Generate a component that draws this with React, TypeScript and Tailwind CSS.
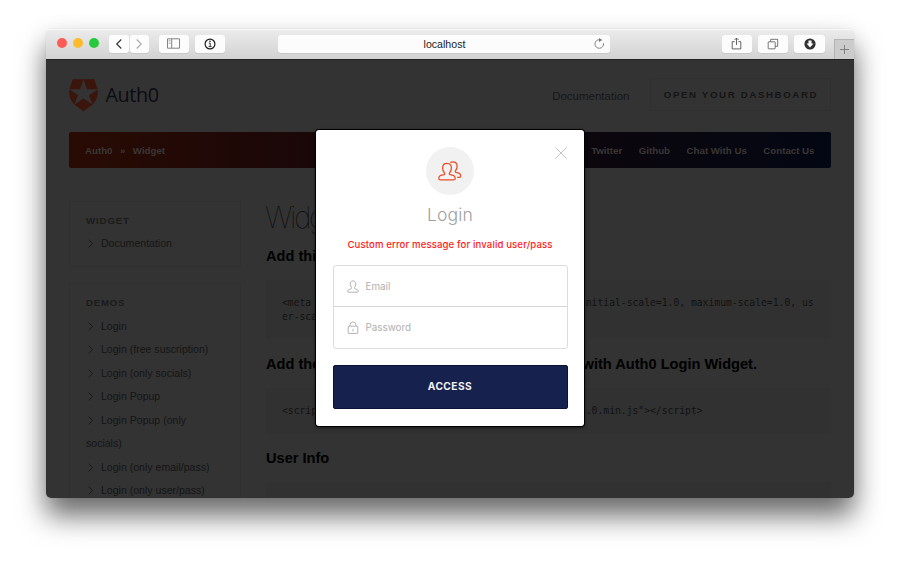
import React from "react";

const demos = [
  "Login",
  "Login (free suscription)",
  "Login (only socials)",
  "Login Popup",
  "Login Popup (only socials)",
  "Login (only email/pass)",
  "Login (only user/pass)",
];

function ToolButton({ className, children }: { className: string; children: React.ReactNode }) {
  return (
    <div className={"flex h-[18px] items-center justify-center rounded-[3px] bg-[#fcfcfc] shadow-[0_1px_0_#c8c8c8] " + className}>
      {children}
    </div>
  );
}

function Toolbar() {
  return (
    <div className="flex h-[30px] items-start rounded-t-[4px] bg-linear-to-b from-[#ececec] to-[#d2d2d2] pt-[5.5px] shadow-[inset_0_1px_0_#f8f8f8]">
      <div className="ml-[10.5px] flex gap-[6.3px] pt-[3.5px]">
        <span className="size-[10px] rounded-full bg-[#fc5b57]" />
        <span className="size-[10px] rounded-full bg-[#fdbc2e]" />
        <span className="size-[10px] rounded-full bg-[#27c93c]" />
      </div>
      <ToolButton className="ml-[9.9px] w-[20px]">
        <svg width="8" height="12" viewBox="0 0 8 12" fill="none" stroke="#333" strokeWidth="1.1"><path d="M6.3 1.5 1.7 6l4.6 4.5" /></svg>
      </ToolButton>
      <ToolButton className="ml-px w-[19px]">
        <svg width="8" height="12" viewBox="0 0 8 12" fill="none" stroke="#aaa" strokeWidth="1.1"><path d="M1.7 1.5 6.3 6l-4.6 4.5" /></svg>
      </ToolButton>
      <ToolButton className="ml-[10px] w-[30px]">
        <svg width="13" height="11" viewBox="0 0 13 11" fill="none" stroke="#777" strokeWidth=".9"><path d="M.5.8h12v9.4H.5zM4.7.8v9.4" /><path d="M1.6 2.5h2M1.6 4h2M1.6 5.5h2" stroke="#999" strokeWidth=".6" /></svg>
      </ToolButton>
      <ToolButton className="ml-[6px] w-[30px]">
        <svg width="12" height="12" viewBox="0 0 12 12" fill="none" stroke="#1c1c1c" strokeWidth="1.2"><circle cx="6" cy="6" r="4.9" /><path d="M4.8 5.1h1.4v3.2M4.6 8.6h3" strokeWidth=".9" /><circle cx="6" cy="3.3" r=".8" fill="#1c1c1c" stroke="none" /></svg>
      </ToolButton>
      <ToolButton className="ml-[53px] w-[332px]">
        <span className="ml-[17px] flex-1 text-center text-[10.6px] leading-[18px] text-[#222]">localhost</span>
        <svg className="mr-[5px]" width="11" height="12" viewBox="0 0 11 12" fill="none" stroke="#777" strokeWidth=".9"><path d="M9.5 5.2a4.3 4.3 0 1 1-3.8-3.5" /><path d="m5 0 3.3 2L5 4z" fill="#777" stroke="none" /></svg>
      </ToolButton>
      <ToolButton className="ml-[112px] w-[30px]">
        <svg width="11" height="13" viewBox="0 0 11 13" fill="none" stroke="#555" strokeWidth=".9"><path d="M3.6 4.7H1.2v7.2h8.6V4.7H7.4M5.5 8V1.2M3.5 3l2-2 2 2" /></svg>
      </ToolButton>
      <ToolButton className="ml-[6.3px] w-[30px]">
        <svg width="12" height="12" viewBox="0 0 12 12" fill="none" stroke="#555" strokeWidth=".8"><rect x="1.2" y="3.8" width="7" height="7" rx=".5" /><path d="M3.7 3.8V1.3h7v7H8.2" /></svg>
      </ToolButton>
      <ToolButton className="ml-[6px] w-[31px]">
        <svg width="12" height="12" viewBox="0 0 12 12"><circle cx="6" cy="6" r="5.6" fill="#303030" /><path d="M4.5 2.5h3v3h2L6 9.4 2.5 5.5h2z" fill="#fff" /></svg>
      </ToolButton>
      <div className="ml-[9px] mt-[4.5px] flex h-[20px] flex-1 items-center justify-center border-l border-t border-[#b4b4b4] bg-[#cbcbcb]">
        <svg width="9" height="9" viewBox="0 0 9 9" stroke="#777" strokeWidth=".9"><path d="M4.5 0v9M0 4.5h9" /></svg>
      </div>
    </div>
  );
}

function SideItem({ label }: { label: string }) {
  return (
    <li>
      <svg className="ml-[2px] mr-[7px] inline-block align-[-1px]" width="6" height="9" viewBox="0 0 6 9" fill="none" stroke="#161616" strokeWidth=".9"><path d="m.7.6 4 3.9-4 3.9" /></svg>
      {label}
    </li>
  );
}

function Sidebar() {
  return (
    <div className="w-[172px] text-[10.55px] leading-[23.5px] text-[#151515]">
      <div className="h-[66px] border border-[#303030] pl-4 pt-[9px]">
        <h4 className="h-[21px] text-[9.7px] font-bold leading-[19px] tracking-[0.85px] text-[#1b1b1b]">WIDGET</h4>
        <ul><SideItem label="Documentation" /></ul>
      </div>
      <div className="mt-[16px] h-[240px] border border-[#303030] pl-4 pr-[30px] pt-[9px]">
        <h4 className="h-[21.5px] text-[9.7px] font-bold leading-[19px] tracking-[0.75px] text-[#1b1b1b]">DEMOS</h4>
        <ul>{demos.map((d) => <SideItem key={d} label={d} />)}</ul>
      </div>
    </div>
  );
}

function Page() {
  return (
    <div className="h-[439px] overflow-hidden rounded-b-[5px] border-t border-[#222] bg-[#333] px-[23px]">
      <header className="flex h-[72px] items-start pt-[18px]">
        <svg className="mt-[0.5px]" width="29" height="33" viewBox="0 0 29 33">
          <path d="M3.8.3h21.400L28 8.500c2 7-.2 14-5.600 18L14.500 32.300 6.600 26.500C1.200 22.500-1 15.500 1 8.500z" fill="#3b140b" />
          <path d="m14.500.3 3.400 9.900H29l-9 6.100 3.700 9.400-9.200-6.200-9.200 6.200 3.700-9.400L0 10.200h11.100z" fill="#333" />
        </svg>
        <span className="ml-[7.5px] w-[60px] font-['Open_Sans',sans-serif] text-[19.800px] font-medium leading-[34px] tracking-[-0.4px] text-[#0c0c12]">Auth0</span>
        <span className="ml-auto mr-[20.5px] text-[11.5px] leading-[36px] text-[#161616]">Documentation</span>
        <span className="flex h-[33px] w-[181px] items-center justify-center whitespace-nowrap rounded-[2px] border border-[#303030] pt-[2px] pl-[1px] text-[9.7px] font-bold tracking-[1.62px] text-[#151515]">OPEN YOUR DASHBOARD</span>
      </header>
      <nav className="flex h-[36px] items-center rounded-[2px] bg-linear-to-r from-[#290b03] via-[#110509] to-[#030713] px-[16px] pt-[2px] text-[9.7px] font-bold text-[#3b3735]">
        <span>Auth0</span>
        <span className="ml-[7.5px]">»</span>
        <span className="ml-[7.5px]">Widget</span>
        <div className="ml-auto flex gap-[16.600px] pr-[0.5px]">
          <span>Twitter</span>
          <span>Github</span>
          <span>Chat With Us</span>
          <span>Contact Us</span>
        </div>
      </nav>
      <div className="flex gap-[25px] pt-[33px]">
        <Sidebar />
        <main className="flex-1 font-['Liberation_Sans',Arial,sans-serif]">
          <h1 className="-ml-px h-[46px] font-['Inter',sans-serif] text-[29.500px] font-thin leading-[32px] tracking-[-2.300px] text-[#0a0a0a]">Widget</h1>
          <h3 className="h-[33px] text-[14.6px] font-bold leading-[19px] text-black">Add this meta tag</h3>
          <pre className="h-[59px] whitespace-pre-wrap break-all bg-[#313131] px-[16px] pt-[16px] font-['DejaVu_Sans_Mono',monospace] text-[9.71px] leading-[13.700px] text-[#121212]">{'<meta name="viewport" content="width=device-width, initial-scale=1.0, maximum-scale=1.0, user-scalable=0" />'}</pre>
          <h3 className="flex h-[49px] justify-between pr-[74px] pt-[16px] text-[14.6px] font-bold leading-[19px] text-black">
            <span>Add the following script</span>
            <span>with Auth0 Login Widget.</span>
          </h3>
          <pre className="h-[46px] bg-[#313131] px-[16px] pt-[16px] font-['DejaVu_Sans_Mono',monospace] text-[9.71px] leading-[13.700px] text-[#121212]">{'<script src="https://cdn.auth0.com/w2/auth0-widget-5.0.min.js"></script>'}</pre>
          <h3 className="h-[48px] pt-[15px] text-[14.6px] font-bold leading-[19px] text-black">User Info</h3>
          <div className="h-[40px] bg-[#313131]" />
        </main>
      </div>
    </div>
  );
}

const personPath =
  "M8 1C5.500 1 4.300 2.900 4.300 5.200c0 2 .7 3.300 1.700 4.600.5.8.2 1.500-.7 1.800L2.500 12.600C1.300 13 .9 14 .9 15.200c0 .6.4.9 1 .9h12.200c.6 0 1-.3 1-.9 0-1.200-.4-2.200-1.600-2.600l-2.800-1c-.9-.3-1.200-1-.7-1.800 1-1.300 1.700-2.600 1.700-4.600C11.700 2.900 10.500 1 8 1z";

function LoginDialog() {
  return (
    <div className="absolute left-[270px] top-[101px] flex h-[296px] w-[268px] flex-col items-center rounded-[3px] bg-white px-[17px] pt-[17px] font-['Inter',sans-serif] shadow-[0_0_0_1px_#000,0_1px_3px_1px_rgba(0,0,0,.45)]">
      <svg className="absolute right-[17px] top-[17px]" width="12" height="12" viewBox="0 0 12 12" stroke="#c4c4c4" strokeWidth="1"><path d="m.4.4 11.200 11.200M11.600.4.4 11.600" /></svg>
      <div className="flex size-[48px] items-center justify-center rounded-full bg-[#f1f1f1]">
        <svg width="24" height="21" viewBox="0 0 24 21" fill="none" stroke="#ec4b27" strokeWidth="1.25" strokeLinejoin="round">
          <path d="M9 2.300C6 2.300 4.600 4.400 4.600 7c0 2 .8 3.600 1.800 4.900.5.800.3 1.400-.6 1.700l-3 .8C1.300 14.800.8 15.900.8 17.400c0 .9.600 1.500 1.500 1.500h13.400c.9 0 1.500-.6 1.500-1.500 0-1.500-.5-2.600-2-3l-3-.8c-.9-.3-1.100-.9-.6-1.700 1-1.300 1.800-2.900 1.800-4.900 0-2.600-1.400-4.700-4.400-4.700z" />
          <path d="M12.300 1.600c.8-.5 1.600-.7 2.600-.7 2.900 0 4.200 1.900 4.200 4.300 0 1.900-.6 3.300-1.500 4.500-.5.800-.3 1.400.6 1.700l2.600.8c1.400.4 1.900 1.400 1.900 2.700 0 .9-.5 1.400-1.400 1.400h-2.100" />
        </svg>
      </div>
      <h2 className="mt-[8px] text-[17.600px] font-light leading-[24px] tracking-[0.1px] text-[#a0a0a0]">Login</h2>
      <p className="mt-[10.500px] whitespace-nowrap text-[9.600px] font-medium leading-[14px] tracking-[0.12px] text-[#ff1a1a]">Custom error message for invalid user/pass</p>
      <div className="mt-[13.500px] h-[84px] w-[235px] shrink-0 rounded-[3px] border-[1.500px] border-[#dcdcdc] text-[9.850px] text-[#b0b0b0]">
        <div className="flex h-[41px] items-center border-b border-[#d5d5d5] pl-[13px]">
          <svg width="12" height="13" viewBox="0 0 16 17" fill="none" stroke="#aaa" strokeWidth="1.200"><path d={personPath} /></svg>
          <span className="ml-[7px]">Email</span>
        </div>
        <div className="flex h-[41px] items-center pl-[13px]">
          <svg width="12" height="13" viewBox="0 0 12 13" fill="none" stroke="#aaa" strokeWidth=".9"><rect x="1.200" y="5.200" width="9.600" height="7.200" rx=".5" /><path d="M3 5V3.900a3 3 0 0 1 6 0V5M6 7.800v2.400" /></svg>
          <span className="ml-[7px]">Password</span>
        </div>
      </div>
      <button className="mt-[16px] h-[44px] w-[235px] shrink-0 rounded-[2px] border border-[#0b1238] bg-[#16214d] text-[10.200px] font-bold tracking-[0.45px] text-[#f3f3f3]">ACCESS</button>
    </div>
  );
}

export default function App() {
  return (
    <div className="h-[562px] w-[900px] overflow-hidden bg-white px-[46px] pt-[29px] font-['Liberation_Sans',Arial,sans-serif]">
      <div className="relative h-[469px] w-[808px] rounded-[5px] shadow-[0_18px_28px_rgba(0,0,0,.57),0_3px_26px_rgba(0,0,0,.06),0_0_1px_rgba(0,0,0,.3)]">
        <Toolbar />
        <Page />
        <LoginDialog />
      </div>
    </div>
  );
}
